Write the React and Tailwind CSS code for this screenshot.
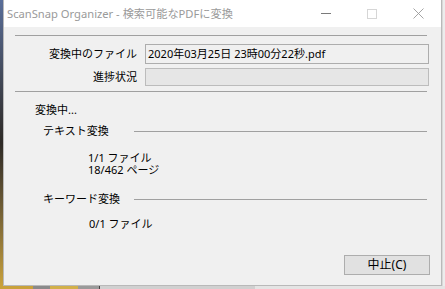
import React from "react";

const font = { fontFamily: '"Noto Sans", "Noto Sans CJK JP", sans-serif' };

function Sep({ className = "" }) {
  return <div className={"h-px bg-[#a0a0a0] " + className} />;
}

export default function App() {
  return (
    <div className="w-[445px] h-[289px] flex flex-col overflow-hidden bg-[#e9e9e9]" style={font}>
      <div className="flex h-[286px]">
        {/* left desktop strip */}
        <div className="w-[3px] h-full bg-gradient-to-b from-[#5a6f9a] via-[#2e2a26] to-[#c9a13a]" />
        {/* window */}
        <div className="w-[439px] h-full flex flex-col border-x border-b border-[#b9b9b9] bg-[#f0f0f0]">
          {/* title bar */}
          <div className="h-[27px] bg-white flex items-center">
            <div className="pl-[3px] text-[11.2px] text-[#9a9a9a] whitespace-nowrap leading-none flex-1">
              ScanSnap Organizer - 検索可能なPDFに変換
            </div>
            <div className="w-[46px] h-full flex items-center justify-center">
              <div className="w-[10px] h-px bg-[#7a7a7a]" />
            </div>
            <div className="w-[46px] h-full flex items-center justify-center">
              <div className="w-[10px] h-[10px] border border-[#d6d6d6]" />
            </div>
            <div className="w-[46px] h-full flex items-center justify-center">
              <svg width="11" height="11" viewBox="0 0 11 11">
                <path d="M0.5 0.5 L10.5 10.5 M10.5 0.5 L0.5 10.5" stroke="#9a9a9a" strokeWidth="0.9" fill="none" />
              </svg>
            </div>
          </div>
          {/* body */}
          <div className="flex flex-col text-[11px] text-black">
            <Sep className="mt-[8px] ml-[11px] w-[412px]" />
            <div className="mt-[8px] h-[20px] flex items-center">
              <div className="w-[133px] text-right whitespace-nowrap">変換中のファイル</div>
              <div className="ml-[8px] w-[284px] h-full border border-[#adadad] bg-[#f0f0f0] flex items-center pl-[2px] whitespace-nowrap">
                2020年03月25日 23時00分22秒.pdf
              </div>
            </div>
            <div className="mt-[4px] h-[18px] flex items-center">
              <div className="w-[133px] text-right whitespace-nowrap">進捗状況</div>
              <div className="ml-[8px] w-[284px] h-full border border-[#bcbcbc] bg-[#e6e6e6]" />
            </div>
            <Sep className="mt-[5px] ml-[11px] w-[412px]" />
            <div className="mt-[11px] h-[14px] leading-[14px] pl-[31px]">変換中...</div>
            <div className="mt-[7px] h-[14px] flex items-center">
              <div className="pl-[39px] w-[130px] leading-[14px] whitespace-nowrap">テキスト変換</div>
              <Sep className="w-[293px]" />
            </div>
            <div className="mt-[14px] pl-[84px] h-[12px] flex items-center whitespace-nowrap">1/1 ファイル</div>
            <div className="pl-[84px] h-[12px] flex items-center whitespace-nowrap">18/462 ページ</div>
            <div className="mt-[16px] h-[14px] flex items-center">
              <div className="pl-[39px] w-[130px] leading-[14px] whitespace-nowrap">キーワード変換</div>
              <Sep className="w-[293px]" />
            </div>
            <div className="mt-[11px] h-[14px] leading-[14px] pl-[85px] whitespace-nowrap">0/1 ファイル</div>
            <div className="mt-[24px] ml-[340px] w-[86px] h-[20px] border border-[#adadad] bg-[#e1e1e1] flex items-center justify-center text-[12px]">
              中止(C)
            </div>
          </div>
        </div>
        {/* right strip */}
        <div className="flex-1 h-full bg-[#ececec] border-l border-[#d8d8d8]" />
      </div>
      {/* bottom desktop strip */}
      <div className="flex h-[3px]">
        <div className="w-[33px] bg-[#c9a13a]" />
        <div className="w-[17px] bg-[#8a8a8a]" />
        <div className="w-[28px] bg-[#d2b04a]" />
        <div className="w-[22px] bg-[#9a9a9a] border-r border-[#444]" />
        <div className="w-[155px] bg-[#d0d0d0]" />
        <div className="flex-1 bg-[#e4e4e4]" />
      </div>
    </div>
  );
}
